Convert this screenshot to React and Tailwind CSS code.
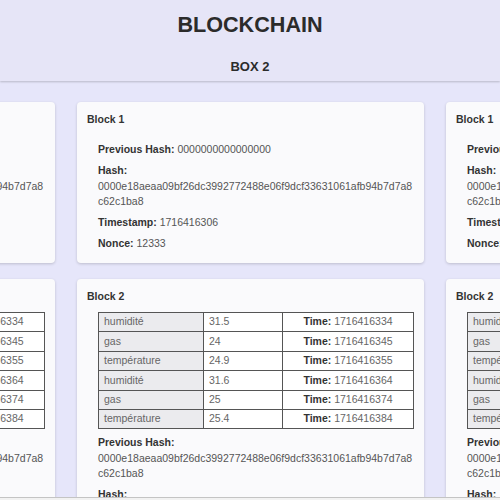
const HASH = "0000e18aeaa09bf26dc3992772488e06f9dcf33631061afb94b7d7a8c62c1ba8";

const readings = [
  { type: "humidité", value: "31.5", time: "1716416334" },
  { type: "gas", value: "24", time: "1716416345" },
  { type: "température", value: "24.9", time: "1716416355" },
  { type: "humidité", value: "31.6", time: "1716416364" },
  { type: "gas", value: "25", time: "1716416374" },
  { type: "température", value: "25.4", time: "1716416384" },
];

const Field = ({ label, value }) => (
  <p className="break-words">
    <span className="font-bold text-[#333]">{label}</span> {value}
  </p>
);

const GenesisBlock = () => (
  <div className="bg-[#fafafc] rounded-[4px] shadow-[0_1px_3px_rgba(0,0,0,0.18)] pt-[10px] pb-[11px] pl-[10px] pr-[10px]">
    <h3 className="font-bold text-[#333]">Block 1</h3>
    <div className="pl-[11px] mt-[14.5px] flex flex-col gap-[5.5px] text-[#555]">
      <Field label="Previous Hash:" value="0000000000000000" />
      <Field label="Hash:" value={HASH} />
      <Field label="Timestamp:" value="1716416306" />
      <Field label="Nonce:" value="12333" />
    </div>
  </div>
);

const DataBlock = () => (
  <div className="bg-[#fafafc] rounded-[4px] shadow-[0_1px_3px_rgba(0,0,0,0.18)] pt-[10px] pb-[11px] pl-[10px] pr-[10px]">
    <h3 className="font-bold text-[#333]">Block 2</h3>
    <div className="pl-[11px] mt-[8px] text-[#555]">
      <table className="w-full border-collapse table-fixed">
        <tbody>
          {readings.map((r, i) => (
            <tr key={i} className="h-[19.4px]">
              <td className="w-[105px] border border-[#555] bg-[#ebebee] text-[#666] px-[5px] py-0">{r.type}</td>
              <td className="w-[79px] border border-[#555] bg-white text-[#666] px-[5px] py-0">{r.value}</td>
              <td className="border border-[#555] bg-white text-[#666] text-center py-0">
                <span className="font-bold text-[#333]">Time:</span> {r.time}
              </td>
            </tr>
          ))}
        </tbody>
      </table>
      <div className="mt-[6px] flex flex-col gap-[5.5px]">
        <Field label="Previous Hash:" value={HASH} />
        <Field label="Hash:" value={HASH} />
        <Field label="Timestamp:" value="1716416384" />
        <Field label="Nonce:" value="4821" />
      </div>
    </div>
  </div>
);

const Column = () => (
  <div className="w-[347px] shrink-0 flex flex-col gap-[16px]">
    <GenesisBlock />
    <DataBlock />
  </div>
);

export default function App() {
  return (
    <div className="min-h-screen h-[500px] overflow-hidden bg-[#e6e6fa] font-['Liberation_Sans',Arial,sans-serif] text-[10.5px] leading-[15.5px]">
      <header className="bg-[#e6e5f7] text-center pt-[12px] pb-[6px] shadow-[0_1px_2px_rgba(0,0,0,0.2)] relative">
        <h1 className="text-[21.6px] leading-[26px] font-bold text-[#2b2b2b]">BLOCKCHAIN</h1>
        <h2 className="mt-[21px] text-[13px] leading-[16px] font-bold text-[#2b2b2b]">BOX 2</h2>
      </header>
      <main className="pt-[21px] flex gap-[22px] ml-[-292px]">
        <Column />
        <Column />
        <Column />
      </main>
      <div className="fixed bottom-0 left-0 right-0 h-[3px] bg-[#f2f2f2] border-t border-[#c4c4c4]" />
    </div>
  );
}
